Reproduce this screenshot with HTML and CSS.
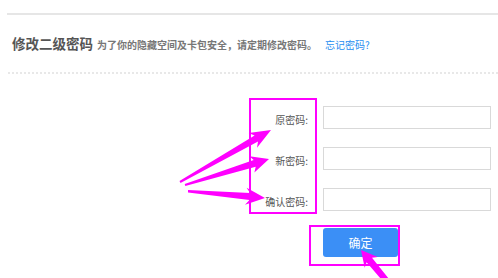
FILE: index.html
```html
<!DOCTYPE html>
<html lang="zh-CN">

<head>
     <meta charset="UTF-8">
     <title>修改二级密码</title>
     <link rel="stylesheet" href="styles.css">
</head>

<body>
     <div class="top-rule"></div>

     <!-- page heading -->
     <div class="head">
          <h2 class="head-title">修改二级密码</h2>
          <span class="head-tip">为了你的隐藏空间及卡包安全，请定期修改密码。</span>
          <a class="head-link" href="#">忘记密码?</a>
     </div>
     <div class="head-rule"></div>

     <!-- password form -->
     <div class="form">
          <div class="form-labels">
               <label class="form-label">原密码:</label>
               <label class="form-label">新密码:</label>
               <label class="form-label">确认密码:</label>
          </div>
          <div class="form-fields">
               <input class="form-input" type="password">
               <input class="form-input" type="password">
               <input class="form-input" type="password">
          </div>
     </div>

     <div class="submit-wrap">
          <button class="submit-btn">确定</button>
     </div>

     <!-- annotation arrows -->
     <svg class="marks" width="498" height="278" viewBox="0 0 498 278">
          <polygon points="180.5,182.9 258,141.4 257,147.8 271,130 248.6,133 254.6,135.4 179.5,181.1" />
          <polygon points="185.3,186 255.7,166.7 254.4,172.4 269,159 249.4,156.2 253.7,160.1 184.7,184" />
          <polygon points="188,192.5 249.5,200.1 245,204.8 265,198 246.6,187.8 250.1,193.1 188,190" />
          <polygon points="392.3,283.1 372,257.8 377.7,256.9 361,250 364.7,267.7 366.6,262.2 387.7,286.9" />
     </svg>
</body>

</html>
```

FILE: styles.css
```css
* {
     box-sizing: border-box;
}

body {
     margin: 0;
     width: 498px;
     height: 278px;
     overflow: hidden;
     position: relative;
     background: #fff;
     font-family: "Noto Sans CJK SC", "DejaVu Sans", sans-serif;
     color: #555;
}

.top-rule {
     margin: 13px 0 0 7px;
     border-top: 2px solid #e6e6e6;
}

.head {
     display: flex;
     align-items: baseline;
     margin-top: 18px;
     padding-left: 12px;
     height: 20px;
}

.head-title {
     margin: 0;
     font-size: 13.5px;
     line-height: 20px;
     font-weight: bold;
     color: #555;
}

.head-tip {
     margin-left: 4px;
     font-size: 10px;
     font-weight: bold;
     color: #777;
}

.head-link {
     margin-left: 8px;
     font-size: 10px;
     color: #1e8ef0;
     text-decoration: none;
}

.head-rule {
     margin: 19px 0 0 8px;
     border-top: 2px dotted #e8e8e8;
}

.form {
     display: flex;
     margin: 24px 0 0 249px;
}

.form-labels {
     width: 68px;
     height: 116px;
     border: 2px solid #f0f;
     padding: 6px 7px 0 0;
     display: flex;
     flex-direction: column;
     gap: 18px;
     text-align: right;
}

.form-label {
     height: 23px;
     padding-top: 4px;
     font-size: 10px;
     line-height: 20px;
     color: #555;
}

.form-fields {
     margin-left: 6px;
     padding-top: 8px;
     display: flex;
     flex-direction: column;
     gap: 18px;
}

.form-input {
     width: 168px;
     height: 23px;
     margin: 0;
     border: 1px solid #d9d9d9;
     outline: none;
}

.submit-wrap {
     width: 91px;
     margin: 11px 0 0 309px;
     border: 2px solid #f0f;
     padding: 1px 0 7px 12px;
}

.submit-btn {
     display: block;
     width: 75px;
     height: 29px;
     border: none;
     border-radius: 3px;
     background: #3b8ff6;
     color: #fff;
     font-family: inherit;
     font-size: 12px;
     cursor: pointer;
}

.marks {
     position: absolute;
     left: 0;
     top: 0;
     fill: #f0f;
     pointer-events: none;
}
```
